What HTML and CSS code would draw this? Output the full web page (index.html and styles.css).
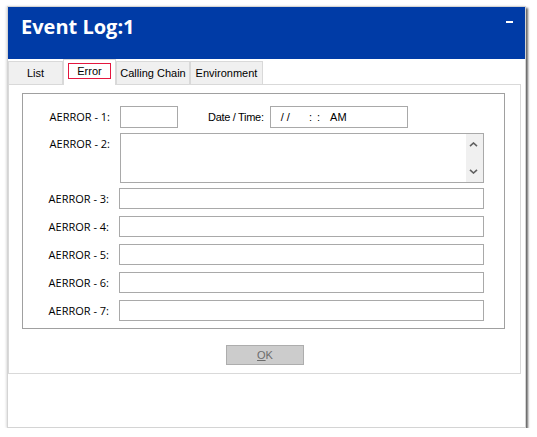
FILE: index.html
```html
<!DOCTYPE html>
<html>
  <head>
    <title>Event Log</title>
    <meta charset="utf-8" />
    <link rel="stylesheet" href="styles.css">
  </head>
  <body>
    <div class="window">
      <div class="title-bar">
        <h1 class="title">Event Log:1</h1>
        <span class="minimize"></span>
      </div>

      <div class="tabs">
        <div class="tab tab-list">List</div>
        <div class="tab tab-error active"><span class="focus">Error</span></div>
        <div class="tab tab-chain">Calling Chain</div>
        <div class="tab tab-env">Environment</div>
      </div>

      <div class="tab-panel">
        <div class="group">
          <div class="row row-first">
            <label class="field-label">AERROR - 1:</label>
            <div class="field short"></div>
            <label class="date-label">Date / Time:</label>
            <div class="field date"><span>/ /</span><span class="time">: :</span><span class="ampm">AM</span></div>
          </div>
          <div class="row row-memo">
            <label class="field-label">AERROR - 2:</label>
            <div class="memo">
              <div class="memo-text"></div>
              <div class="scrollbar">
                <svg width="17" height="5" viewBox="0 0 17 5"><path d="M4 4.2 L7.5 1 L11 4.2" fill="none" stroke="#606060" stroke-width="1.6" /></svg>
                <svg width="17" height="5" viewBox="0 0 17 5"><path d="M4 0.8 L7.5 4 L11 0.8" fill="none" stroke="#606060" stroke-width="1.6" /></svg>
              </div>
            </div>
          </div>
          <div class="row row-line">
            <label class="field-label">AERROR - 3:</label>
            <div class="field wide"></div>
          </div>
          <div class="row row-line">
            <label class="field-label">AERROR - 4:</label>
            <div class="field wide"></div>
          </div>
          <div class="row row-line">
            <label class="field-label">AERROR - 5:</label>
            <div class="field wide"></div>
          </div>
          <div class="row row-line">
            <label class="field-label">AERROR - 6:</label>
            <div class="field wide"></div>
          </div>
          <div class="row row-line">
            <label class="field-label">AERROR - 7:</label>
            <div class="field wide"></div>
          </div>
        </div>

        <div class="button-row">
          <button class="ok-btn" disabled><u>O</u>K</button>
        </div>
      </div>
    </div>
  </body>
</html>
```

FILE: styles.css
```css
body {
  margin: 0;
  padding: 0;
  background: #ffffff;
  color: #000000;
  font-family: "Liberation Sans", Arial, sans-serif;
  font-size: 11px;
}
.window {
  margin: 6px 0 0 7px;
  width: 517px;
  height: 420px;
  border: 1px solid #d4d4d4;
  background: #ffffff;
  box-shadow: 2px 2px 2px rgba(0, 0, 0, 0.6), -1px 0 2px rgba(0, 0, 0, 0.12);
  display: flex;
  flex-direction: column;
}

/* Blue header */
.title-bar {
  height: 52px;
  background: #003ba6;
  display: flex;
  justify-content: space-between;
  align-items: flex-start;
  flex-shrink: 0;
}
.title {
  margin: 0;
  padding: 6px 0 0 13px;
  font-family: "Open Sans", sans-serif;
  font-size: 20px;
  font-weight: bold;
  line-height: 28px;
  color: #ffffff;
}
.minimize {
  width: 7px;
  height: 2px;
  background: #ffffff;
  margin: 14px 12px 0 0;
}

/* Tabs */
.tabs {
  display: flex;
  align-items: flex-end;
  height: 25px;
  flex-shrink: 0;
}
.tab {
  box-sizing: border-box;
  height: 23px;
  line-height: 22px;
  text-align: center;
  background: #f0f0f0;
  border: 1px solid #d9d9d9;
  border-bottom: none;
}
.tab-list {
  width: 55px;
}
.tab-error {
  width: 53px;
}
.tab-chain {
  width: 74px;
}
.tab-env {
  width: 73px;
}
.tab.active {
  height: 26px;
  margin-bottom: -1px;
  padding: 3px 4px 0 4px;
  background: #ffffff;
  position: relative;
  z-index: 1;
}
.focus {
  display: block;
  height: 16px;
  box-sizing: border-box;
  line-height: 14px;
  border: 1px solid #e4163f;
}

/* Tab page */
.tab-panel {
  width: 513px;
  box-sizing: border-box;
  border: 1px solid #d9d9d9;
  padding: 8px 15px 8px 13px;
}
.group {
  border: 1px solid #a0a0a0;
  padding: 12px 20px 7px 0;
  display: flex;
  flex-direction: column;
}
.row {
  display: flex;
  align-items: center;
}
.row-memo {
  align-items: flex-start;
  margin-top: 5px;
}
.row-line {
  margin-top: 7px;
}
.row-memo + .row-line {
  margin-top: 5px;
}
.field-label {
  width: 87px;
  margin-right: 10px;
  text-align: right;
  font-family: "Open Sans", sans-serif;
  font-size: 11px;
  line-height: 22px;
  flex-shrink: 0;
}
.row-line .field-label {
  width: 86px;
  margin-right: 10px;
  line-height: 21px;
}
.field {
  box-sizing: border-box;
  height: 21px;
  border: 1px solid #a9a9a9;
  background: #ffffff;
}
.field.short {
  width: 58px;
  height: 22px;
}
.field.wide {
  flex: 1;
}
.date-label {
  margin: 0 6px 0 30px;
  letter-spacing: -0.3px;
  line-height: 22px;
}
.field.date {
  width: 138px;
  height: 22px;
  padding-left: 10px;
  line-height: 20px;
  white-space: nowrap;
}
.date .time {
  margin-left: 19px;
  word-spacing: 2px;
}
.date .ampm {
  margin-left: 10px;
}

/* Multi-line field with its scroll arrows */
.memo {
  flex: 1;
  height: 50px;
  box-sizing: border-box;
  border: 1px solid #a9a9a9;
  display: flex;
}
.memo-text {
  flex: 1;
}
.scrollbar {
  width: 17px;
  background: #f0f0f0;
  display: flex;
  flex-direction: column;
  justify-content: space-between;
  padding: 8px 0;
}
.scrollbar svg {
  display: block;
}

/* OK button */
.button-row {
  display: flex;
  justify-content: center;
  margin-top: 16px;
}
.ok-btn {
  width: 78px;
  height: 20px;
  margin-left: 3px;
  padding: 0;
  background: #cccccc;
  border: 1px solid #adadad;
  color: #6d6d6d;
  font-family: "Liberation Sans", Arial, sans-serif;
  font-size: 11px;
}
```
